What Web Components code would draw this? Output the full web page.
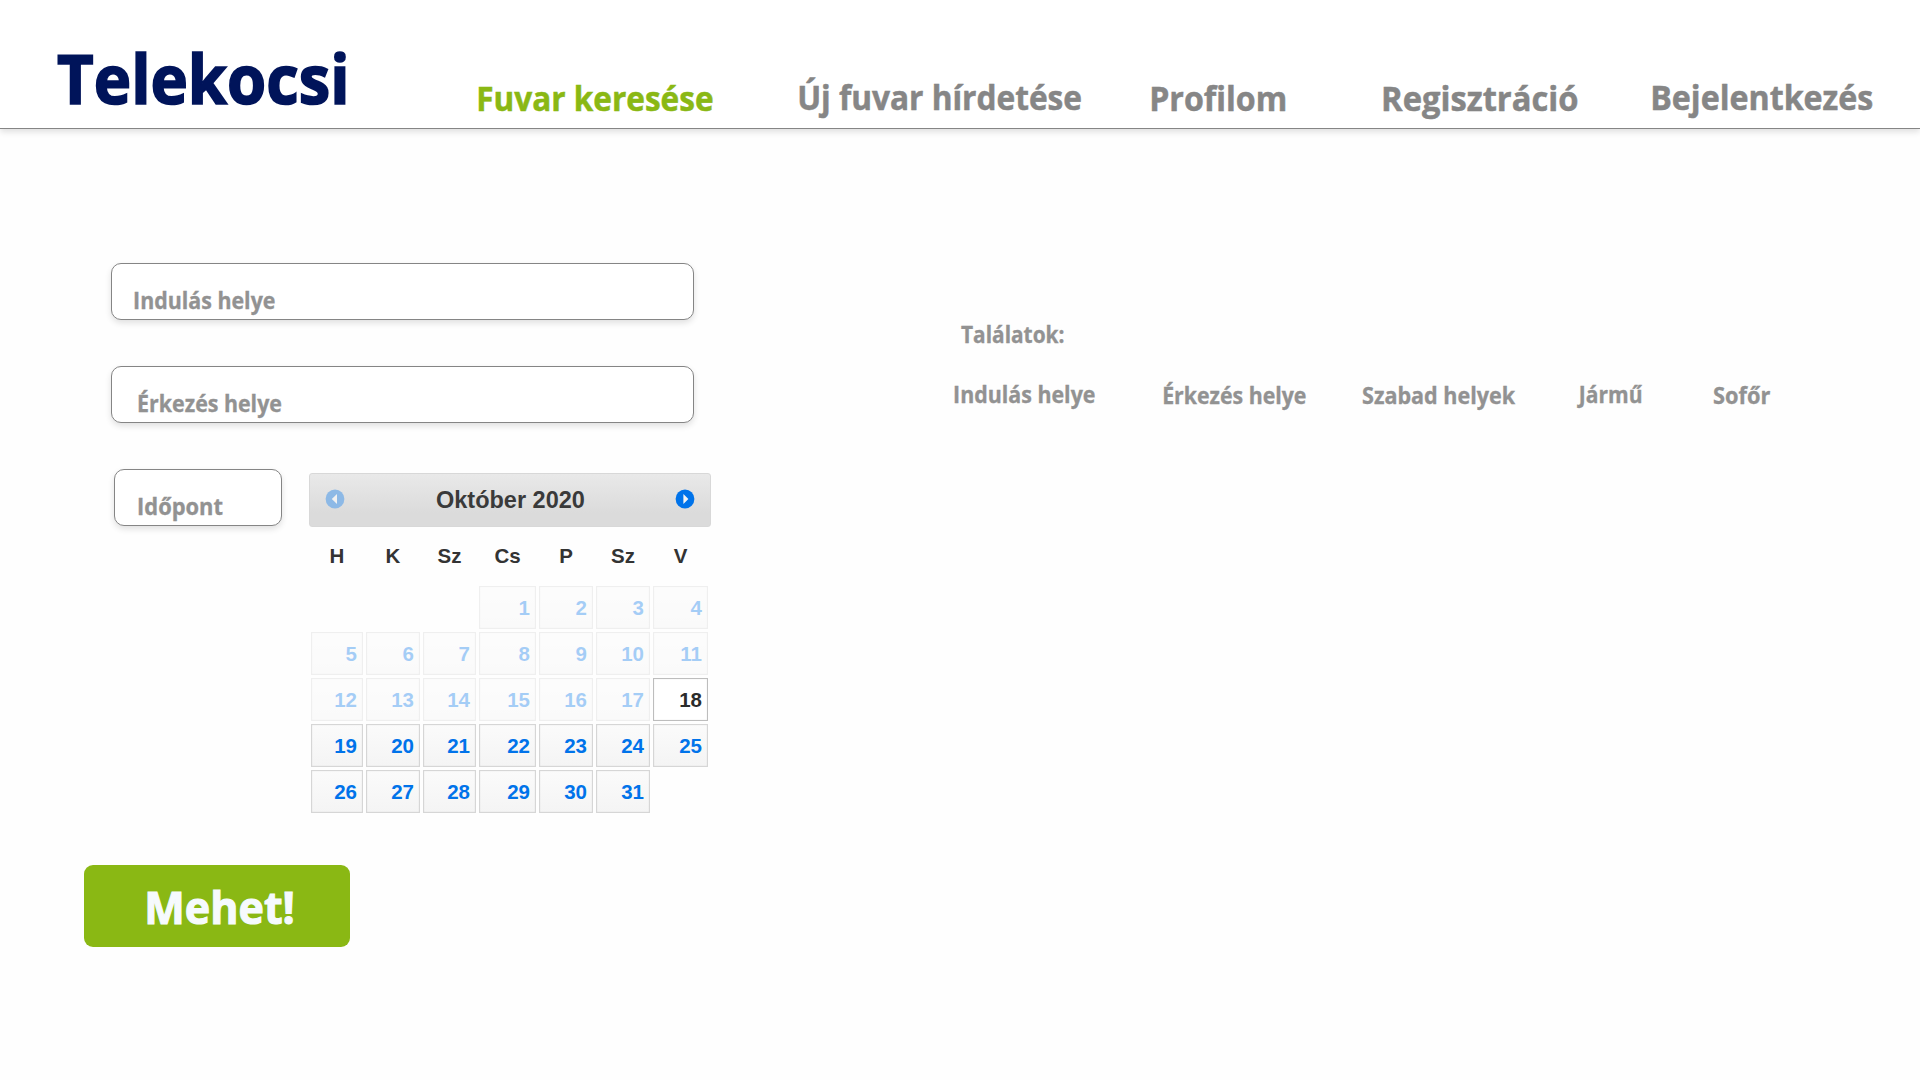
<!DOCTYPE html>
<html lang="hu">
<head>
<meta charset="utf-8">
<title>Telekocsi</title>
<style>
  html, body { margin: 0; background: #fefefe; }
  body { width: 1920px; height: 1080px; overflow: hidden; font-family: "Open Sans", "Noto Sans", sans-serif; }
</style>
</head>
<body>
<tk-app></tk-app>
<script>
const define = (name, html, setup) => {
  const template = document.createElement('template');
  template.innerHTML = html;
  customElements.define(name, class extends HTMLElement {
    connectedCallback() {
      if (this.shadowRoot) return;
      const root = this.attachShadow({ mode: 'open' });
      root.append(template.content.cloneNode(true));
      if (setup) setup(this, root);
    }
  });
};

// A single line of bold text whose ink spans exactly the width given in "w".
const ctx = document.createElement('canvas').getContext('2d');
define('tk-text', `
  <style>
    :host { display: block; flex: none; font-weight: 700; line-height: 1; white-space: nowrap; }
    span { display: inline-block; transform-origin: 0 0; vertical-align: top; -webkit-text-stroke: var(--stroke, .015em) currentColor; }
  </style><span><slot></slot></span>`, (el, root) => {
  const size = +el.getAttribute('size'), w = +el.getAttribute('w');
  el.style.fontSize = size + 'px';
  el.style.width = w + 'px';
  el.style.height = size + 'px';
  ctx.font = `700 ${size}px ${getComputedStyle(el).fontFamily}`;
  const m = ctx.measureText(el.textContent);
  const k = w / (m.actualBoundingBoxRight + m.actualBoundingBoxLeft);
  root.querySelector('span').style.transform = `scaleX(${k}) translateX(${m.actualBoundingBoxLeft}px)`;
});

define('tk-header', `
  <style>
    :host { display: flex; align-items: flex-start; box-sizing: border-box; height: 129px; background: #fff;
      border-bottom: 1px solid #858585; box-shadow: 0 3px 6px rgba(0,0,0,.12); color: #868686; }
    .logo { color: #00145a; margin: 44px 133px 0 58px; --stroke: .025em; }
    nav { display: flex; align-items: flex-start; padding-top: 80px; }
    .active { color: #8ab814; }
    .low { margin-top: 1px; }
  </style>
  <tk-text class="logo" size="68.6" w="288">Telekocsi</tk-text>
  <nav>
    <tk-text class="active low" size="34" w="233.5">Fuvar keresése</tk-text>
    <tk-text size="34" w="282" style="margin-left:86.5px">Új fuvar hírdetése</tk-text>
    <tk-text class="low" size="34" w="133" style="margin-left:71px">Profilom</tk-text>
    <tk-text class="low" size="34" w="193.5" style="margin-left:98.5px">Regisztráció</tk-text>
    <tk-text size="34" w="219.5" style="margin-left:76px">Bejelentkezés</tk-text>
  </nav>`);

define('tk-field', `
  <style>
    :host { display: block; box-sizing: border-box; width: 583px; height: 57px; padding: 26px 0 0 23px;
      border: 1px solid #858585; border-radius: 10px; background: #fff; color: #929292;
      box-shadow: 0 3px 6px rgba(0,0,0,.12); }
    :host([indent]) { padding-left: 27px; }
    :host([short]) { width: 168px; padding-left: 24px; }
  </style><slot></slot>`);

define('tk-button', `
  <style>
    :host { display: flex; box-sizing: border-box; width: 266px; height: 82px; padding: 19px 0 0 64px;
      border-radius: 9px; background: #8ab814; color: #f6fafd; --stroke: .025em; }
  </style><slot></slot>`);

define('tk-day', `
  <style>
    :host { display: block; box-sizing: border-box; height: 43px; padding-right: 5px; text-align: right;
      font-size: 20.5px; line-height: 41px; font-weight: 700; color: #0073ea;
      border: 1px solid #d6d6d6; box-shadow: inset 0 0 1px rgba(0,0,0,.22);
      background: linear-gradient(#fbfbfb, #f4f4f4); }
    :host([past]) { opacity: .35; }
    :host([today]) { background: #fff; color: #2b2b2b; border-color: #bdbdbd; }
  </style><slot></slot>`);

define('tk-calendar', `
  <style>
    :host { display: block; width: 402px; font-family: "Liberation Sans", Arial, sans-serif; }
    header { display: flex; justify-content: space-between; align-items: flex-start; box-sizing: border-box;
      height: 54px; padding: 15px 15px 0; border: 1px solid #d8d8d8; border-radius: 3px;
      background: linear-gradient(#e9e9e9, #dbdbdb 75%); color: #3a3a3a; --stroke: 0; }
    svg { width: 20px; height: 20px; display: block; }
    .week, .days { display: grid; grid-template-columns: 52px 54px 53px 57px 54px 54px 55px; column-gap: 3px; margin-left: 2px; }
    .week { height: 59px; text-align: center; font-size: 20.5px; line-height: 58px; font-weight: 700; color: #333; }
    .days { row-gap: 3px; }
  </style>
  <header>
    <svg viewBox="0 0 20 20"><circle cx="10" cy="10" r="9.4" fill="#8db9e6"/><path d="M12 5v10L6.8 10z" fill="#f1f1f1"/></svg>
    <tk-text size="23" w="148" style="margin:0 1px 0 0">Október 2020</tk-text>
    <svg viewBox="0 0 20 20"><circle cx="10" cy="10" r="9.4" fill="#0073ea"/><path d="M8.4 5v10l5-5z" fill="#f4f4f4"/></svg>
  </header>
  <div class="week"><span>H</span><span>K</span><span>Sz</span><span>Cs</span><span>P</span><span>Sz</span><span>V</span></div>
  <div class="days"></div>`, (el, root) => {
  const days = root.querySelector('.days');
  for (let n = 1; n <= 31; n++) {
    const day = document.createElement('tk-day');
    day.textContent = n;
    if (n < 18) day.setAttribute('past', '');
    if (n === 18) day.setAttribute('today', '');
    if (n === 1) day.style.gridColumn = 4;
    days.append(day);
  }
});

define('tk-search', `
  <style>
    :host { display: flex; flex-direction: column; width: 871px; padding-top: 134px; }
    tk-field { margin: 0 0 46px 111px; }
    .when { display: flex; align-items: flex-start; }
    .when tk-field { margin: 0 27px 0 114px; }
    tk-calendar { margin-top: 4px; }
    tk-button { margin: 52px 0 0 84px; }
  </style>
  <tk-field><tk-text size="22.8" w="140">Indulás helye</tk-text></tk-field>
  <tk-field indent><tk-text size="22.8" w="142.5">Érkezés helye</tk-text></tk-field>
  <div class="when">
    <tk-field short><tk-text size="22.8" w="84">Időpont</tk-text></tk-field>
    <tk-calendar></tk-calendar>
  </div>
  <tk-button><tk-text size="45.5" w="145">Mehet!</tk-text></tk-button>`);

define('tk-results', `
  <style>
    :host { display: block; padding: 195px 0 0 84px; color: #929292; }
    .title { margin-left: 6px; }
    .cols { display: flex; align-items: flex-start; margin-top: 37px; }
    .low { margin-top: 1px; }
  </style>
  <tk-text class="title" size="22.8" w="103">Találatok:</tk-text>
  <div class="cols">
    <tk-text size="22.8" w="140">Indulás helye</tk-text>
    <tk-text class="low" size="22.8" w="142" style="margin-left:69px">Érkezés helye</tk-text>
    <tk-text class="low" size="22.8" w="153" style="margin-left:57px">Szabad helyek</tk-text>
    <tk-text size="22.8" w="65.5" style="margin-left:61.2px">Jármű</tk-text>
    <tk-text class="low" size="22.8" w="56" style="margin-left:71px">Sofőr</tk-text>
  </div>`);

define('tk-app', `
  <style>
    :host { display: block; }
    main { display: flex; align-items: flex-start; }
  </style>
  <tk-header></tk-header>
  <main><tk-search></tk-search><tk-results></tk-results></main>`);
</script>
</body>
</html>
